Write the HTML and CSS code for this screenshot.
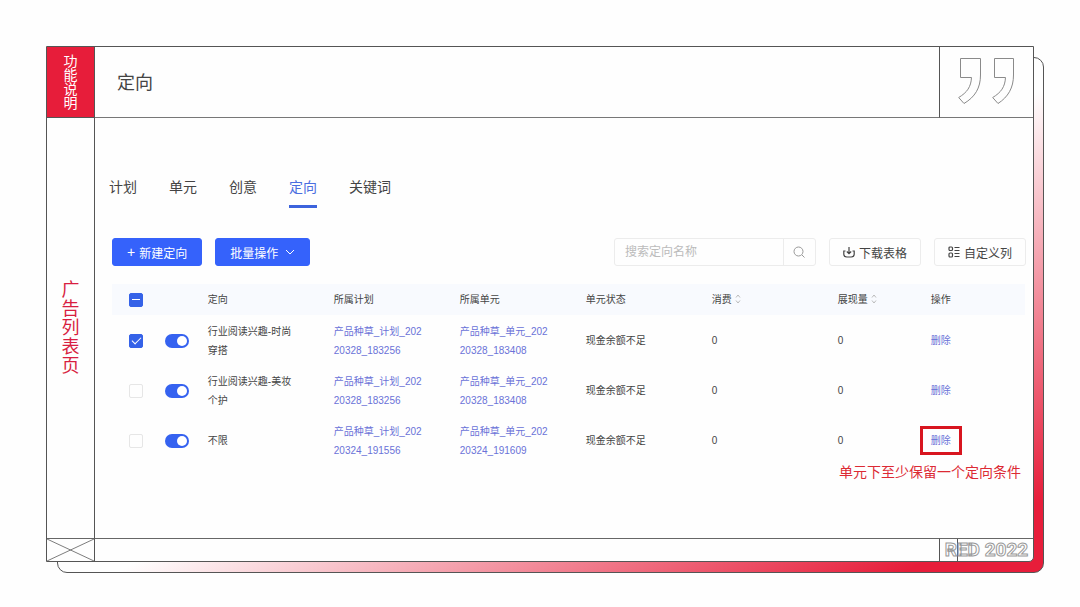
FILE: index.html
```html
<!DOCTYPE html>
<html lang="zh-CN">
  <head>
    <meta charset="UTF-8" />
    <meta name="viewport" content="width=device-width, initial-scale=1.0" />
    <title>定向</title>
    <link rel="stylesheet" href="styles.css" />
  </head>
  <body>
    <div class="board">
      <div class="badge"><span>功能说明</span></div>
      <header class="title">
        <h1>定向</h1>
      </header>
      <div class="quote">
        <svg width="58" height="48" viewBox="0 0 58 48" fill="none" stroke="#8a8a8a">
          <path d="M2.500 0.500H22.500V17C22.500 30 17 39 6 45.500L0.700 39.500C9 34.500 13 29 13.500 19.500H2.500Z" />
          <path d="M36.500 0.500H55.500V17C55.500 30 50 39 40 45.500L34.700 39.500C43 34.500 47 29 47.500 19.500H36.500Z" />
        </svg>
      </div>

      <aside class="side"><span>广告列表页</span></aside>

      <main class="main">
        <nav class="tabs">
          <a href="#plan">计划</a>
          <a href="#unit">单元</a>
          <a href="#idea">创意</a>
          <a href="#target" class="active">定向</a>
          <a href="#keyword">关键词</a>
        </nav>

        <div class="toolbar">
          <button class="btn primary" type="button"><span class="plus">+</span>新建定向</button>
          <button class="btn primary" type="button">
            批量操作
            <svg class="arrow" width="10" height="10" viewBox="0 0 10 10" fill="none" stroke="currentColor">
              <path d="M1 3l4 4 4-4" />
            </svg>
          </button>
          <form class="search">
            <input type="text" placeholder="搜索定向名称" aria-label="搜索定向名称" />
            <button type="button" aria-label="搜索">
              <svg width="12" height="12" viewBox="0 0 12 12" fill="none" stroke="#999">
                <circle cx="5.500" cy="5.500" r="4.500" />
                <path d="M9 9l2.500 2.500" />
              </svg>
            </button>
          </form>
          <button class="btn" type="button">
            <svg width="12" height="12" viewBox="0 0 12 12" fill="none" stroke="#444" stroke-width="1.200">
              <path d="M2.500 5H0.800V8Q0.800 11 3.800 11H8.200Q11.200 11 11.200 8V5H9.500M6 1V7.500M3.800 5.500L6 7.700L8.200 5.500" />
            </svg>
            下载表格
          </button>
          <button class="btn" type="button">
            <svg width="12" height="12" viewBox="0 0 12 12" fill="none" stroke="#444" stroke-width="1.200">
              <rect x="1" y="1" width="3.500" height="3.500" rx="1" />
              <rect x="1" y="7" width="3.500" height="4" rx="1" />
              <path d="M6.500 1.500H11.500M6.500 4.500H11.500M6.500 7.500H11.500M6.500 10.500H11.500" />
            </svg>
            自定义列
          </button>
        </div>

        <table class="list">
          <colgroup>
            <col class="c-check" />
            <col class="c-switch" />
            <col class="c-text" span="5" />
            <col class="c-show" />
            <col class="c-action" />
          </colgroup>
          <thead>
            <tr>
              <th class="check"><input type="checkbox" class="box part" aria-label="全选" /></th>
              <th></th>
              <th>定向</th>
              <th>所属计划</th>
              <th>所属单元</th>
              <th>单元状态</th>
              <th>
                消费
                <svg class="sort" width="6" height="10" viewBox="0 0 6 10" fill="none" stroke="#bbb">
                  <path d="M1 3.500l2-2.500 2 2.500M1 6.500l2 2.500 2-2.500" />
                </svg>
              </th>
              <th>
                展现量
                <svg class="sort" width="6" height="10" viewBox="0 0 6 10" fill="none" stroke="#bbb">
                  <path d="M1 3.500l2-2.500 2 2.500M1 6.500l2 2.500 2-2.500" />
                </svg>
              </th>
              <th>操作</th>
            </tr>
          </thead>
          <tbody>
            <tr>
              <td class="check"><input type="checkbox" class="box" aria-label="选择" checked /></td>
              <td><input type="checkbox" role="switch" class="switch" aria-label="启用" checked /></td>
              <td>行业阅读兴趣-时尚穿搭</td>
              <td><a href="#plan">产品种草_计划_20220328_183256</a></td>
              <td><a href="#unit">产品种草_单元_20220328_183408</a></td>
              <td>现金余额不足</td>
              <td>0</td>
              <td>0</td>
              <td><a href="#del" class="del">删除</a></td>
            </tr>
            <tr>
              <td class="check"><input type="checkbox" class="box" aria-label="选择" /></td>
              <td><input type="checkbox" role="switch" class="switch" aria-label="启用" checked /></td>
              <td>行业阅读兴趣-美妆个护</td>
              <td><a href="#plan">产品种草_计划_20220328_183256</a></td>
              <td><a href="#unit">产品种草_单元_20220328_183408</a></td>
              <td>现金余额不足</td>
              <td>0</td>
              <td>0</td>
              <td><a href="#del" class="del">删除</a></td>
            </tr>
            <tr>
              <td class="check"><input type="checkbox" class="box" aria-label="选择" /></td>
              <td><input type="checkbox" role="switch" class="switch" aria-label="启用" checked /></td>
              <td>不限</td>
              <td><a href="#plan">产品种草_计划_20220324_191556</a></td>
              <td><a href="#unit">产品种草_单元_20220324_191609</a></td>
              <td>现金余额不足</td>
              <td>0</td>
              <td>0</td>
              <td><a href="#del" class="del marked">删除</a></td>
            </tr>
          </tbody>
        </table>
        <p class="note">单元下至少保留一个定向条件</p>
      </main>

      <div class="cross">
        <svg viewBox="0 0 48 23" preserveAspectRatio="none" fill="none" stroke="#777">
          <path d="M0 0L48 23M48 0L0 23" />
        </svg>
      </div>
      <div class="foot"></div>
      <div class="brand"><span>RED 2022</span></div>
    </div>
  </body>
</html>
```
FILE: styles.css
```css
* {
  box-sizing: border-box;
}
body {
  display: flex;
  min-height: 100vh;
  margin: 0;
  padding: 46px 46px 45px;
  background: #fefefe;
  color: #444;
  font-family: "Liberation Sans", "Noto Sans CJK SC", sans-serif;
}
a {
  color: inherit;
  text-decoration: none;
}
button,
input {
  margin: 0;
  font-family: inherit;
}

/* 外框 */
.board {
  position: relative;
  z-index: 0;
  flex: 1;
  display: grid;
  grid-template-columns: 48px 1fr 94px;
  grid-template-rows: 71px 1fr 23px;
  border: 1px solid transparent;
}
.board::before,
.board::after {
  content: "";
  position: absolute;
  z-index: -2;
  top: 10px;
  right: -11px;
  bottom: -12px;
  left: 10px;
  border: 1px solid #555;
  border-radius: 10px;
  background: linear-gradient(to bottom right, #fefefe 53%, #e71d3a 93%);
}
.board::after {
  z-index: -1;
  top: -1px;
  right: -1px;
  bottom: -1px;
  left: -1px;
  border-radius: 0 0 5px 0;
  background: #fefefe;
}
.badge,
.side {
  display: flex;
  align-items: center;
  justify-content: center;
  border-right: 1px solid #555;
}
.badge {
  border-bottom: 1px solid #555;
  background: #e71d3a;
  color: #fff;
}
.badge span {
  width: 14px;
  font-size: 14px;
  line-height: 14px;
}
.side {
  color: #d81e41;
}
.side span {
  width: 18px;
  font-size: 18px;
  line-height: 19px;
}
.title {
  display: flex;
  align-items: center;
  padding: 0 22px 2px;
  border-bottom: 1px solid #777;
}
.title h1 {
  margin: 0;
  font-size: 18px;
  font-weight: 400;
}
.quote {
  display: flex;
  align-items: center;
  justify-content: center;
  border-left: 1px solid #555;
  border-bottom: 1px solid #777;
}
.cross,
.foot,
.brand {
  border-top: 1px solid #666;
}
.cross {
  border-right: 1px solid #555;
}
.cross svg {
  display: block;
  width: 100%;
  height: 100%;
}
.brand {
  display: flex;
  align-items: center;
  justify-content: center;
  border-left: 1px solid #555;
  background: linear-gradient(#555, #555) 17px 0 / 1px 100% no-repeat;
  font-family: Roboto, sans-serif;
  font-size: 19px;
  font-weight: 700;
  line-height: 22px;
  white-space: nowrap;
  color: #fefefe;
  -webkit-text-stroke: 1px #999;
}

/* 内容 */
.main {
  grid-column: 2 / 4;
  padding: 60px 7px 40px 17px;
}
.tabs {
  display: flex;
  gap: 32px;
  margin-left: -3px;
  font-size: 14px;
  line-height: 18px;
}
.tabs a {
  padding-bottom: 9px;
  border-bottom: 3px solid transparent;
}
.tabs .active {
  border-color: #3c63dc;
  color: #4a6ee0;
}
.toolbar {
  display: flex;
  gap: 13px;
  margin-top: 30px;
}
.btn {
  display: flex;
  align-items: center;
  justify-content: center;
  gap: 4px;
  height: 28px;
  padding: 0 13px;
  border: 1px solid #ececec;
  border-radius: 3px;
  background: #fefefe;
  color: #444;
  font-size: 12px;
  white-space: nowrap;
}
.primary {
  padding: 0 14px;
  border-color: #3562fb;
  background: #3562fb;
  color: #fff;
}
.plus {
  font-size: 14px;
}
.arrow {
  margin-left: 3px;
}
.search {
  display: flex;
  width: 202px;
  height: 28px;
  margin-left: auto;
  border: 1px solid #ececec;
  border-radius: 3px;
}
.search input {
  flex: 1;
  min-width: 0;
  padding: 0 10px;
  border: 0;
  background: none;
  font-size: 12px;
}
.search input::placeholder {
  color: #bbb;
}
.search button {
  display: flex;
  align-items: center;
  justify-content: center;
  width: 32px;
  padding: 0;
  border: 0;
  border-left: 1px solid #ececec;
  background: none;
}

/* 列表 */
.list {
  width: 100%;
  margin-top: 18px;
  border-collapse: collapse;
  table-layout: fixed;
  border-right: 2px solid transparent;
  font-size: 10px;
  line-height: 19px;
}
.c-check,
.c-switch {
  width: 4.7%;
}
.c-text {
  width: 13.8%;
}
.c-show {
  width: 10.2%;
}
.list th {
  height: 31px;
  padding: 0 0 0 10px;
  background: #f8fafe;
  font-weight: 400;
  text-align: left;
}
.list td {
  height: 50px;
  padding: 1px 26px 0 10px;
  word-break: break-all;
}
.list .check {
  padding-left: 17px;
  padding-right: 0;
}
.list td:nth-child(2) {
  padding-right: 0;
}
.list a {
  color: #6a72d8;
}
.sort {
  vertical-align: -1px;
}
.box {
  display: block;
  width: 14px;
  height: 14px;
  appearance: none;
  border: 1px solid #e6e6e6;
  border-radius: 2px;
}
.box:checked,
.box.part {
  display: grid;
  place-items: center;
  border-color: #3562e8;
  background: #3562e8;
}
.box:checked::after {
  content: "";
  width: 8px;
  height: 4px;
  margin-bottom: 3px;
  border: solid #fff;
  border-width: 0 0 1px 1px;
  transform: rotate(-45deg);
}
.box.part::after {
  content: "";
  width: 8px;
  height: 1px;
  background: #fff;
}
.switch {
  display: flex;
  align-items: center;
  width: 24px;
  height: 14px;
  padding: 2px;
  appearance: none;
  border-radius: 7px;
  background: #ccc;
}
.switch::after {
  content: "";
  width: 10px;
  height: 10px;
  border-radius: 50%;
  background: #fff;
}
.switch:checked {
  justify-content: flex-end;
  background: #3562f0;
}
.del {
  display: inline-block;
  line-height: 15px;
  white-space: nowrap;
}
.marked {
  position: relative;
}
.marked::after {
  content: "";
  position: absolute;
  inset: -7px -11px;
  border: 3px solid #d8151f;
}
.note {
  margin: 0 5px 0 0;
  color: #dc2a34;
  font-size: 14px;
  line-height: 14px;
  text-align: right;
}
```
